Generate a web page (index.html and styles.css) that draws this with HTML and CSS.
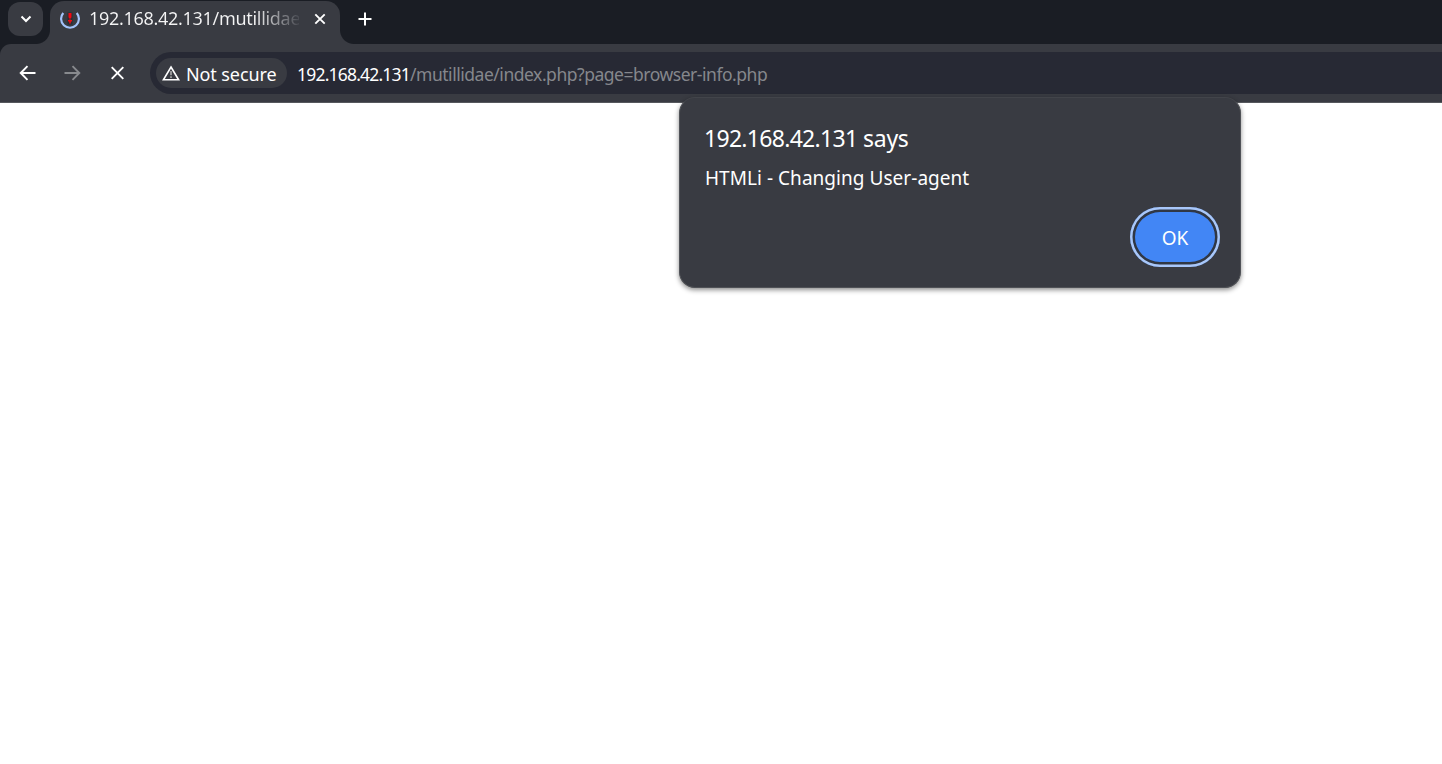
FILE: index.html
```html
<!DOCTYPE html>
<html lang="en">
<head>
<meta charset="utf-8">
<title>192.168.42.131/mutillidae</title>
<link rel="stylesheet" href="styles.css">
</head>
<body>
<header class="tabstrip">
  <button class="tab-search" aria-label="Search tabs"><svg width="12" height="8" viewBox="0 0 12 8"><path d="M1.500 1.500 6 6l4.500-4.500" fill="none" stroke="#fff" stroke-width="2"/></svg></button>
  <div class="tab">
    <svg class="favicon" width="20" height="20" viewBox="0 0 20 20"><path d="M3.300 4A8.900 8.900 0 1 0 16.700 4" fill="none" stroke="#a2c2fa" stroke-width="2.200"/><path d="M7.500 3.500h5v12h-5z" fill="#282e36"/><path d="M8.500 4h3v4l-.5 1.500H9L8.500 8zM8 11h1.400v-.8h1.200v.8H12v1.600h-1.200v1.800H9.200v-1.800H8z" fill="#f40813"/></svg>
    <span class="tab-title">192.168.42.131/mutillidae</span>
    <svg class="tab-close" width="12" height="12" viewBox="0 0 12 12"><path d="M1.300 1.300l9.400 9.400M10.700 1.300l-9.400 9.400" stroke="#fff" stroke-width="1.900"/></svg>
  </div>
  <svg class="new-tab" width="14" height="14" viewBox="0 0 14 14"><path d="M7 .5v13M.5 7h13" stroke="#fff" stroke-width="2"/></svg>
</header>
<nav class="toolbar">
  <svg class="nav-icon" width="18" height="18" viewBox="0 0 18 18"><path d="M16.500 9H2M8.500 2.200 1.700 9l6.800 6.800" fill="none" stroke="#fff" stroke-width="1.900"/></svg>
  <svg class="nav-icon" width="18" height="18" viewBox="0 0 18 18"><path d="M.5 9H15M8.500 2.200 15.300 9l-6.800 6.800" fill="none" stroke="#888a8e" stroke-width="1.900"/></svg>
  <svg class="nav-icon" width="18" height="18" viewBox="0 0 18 18"><path d="M2.700 3.200l11.600 11.600M14.300 3.200 2.700 14.800" stroke="#fff" stroke-width="1.900"/></svg>
  <div class="omnibox">
    <div class="security">
      <svg width="18" height="16" viewBox="0 0 18 16"><path d="M9 2 16.600 14.800H1.400z" fill="none" stroke="#fff" stroke-width="1.600"/><path d="M9 6v4.300M9 11.300v1.600" stroke="#bbb" stroke-width="1.400"/></svg>
      <span class="security-text">Not secure</span>
    </div>
    <div class="url"><span class="host">192.168.42.131</span><span class="path">/mutillidae/index.php?page=browser-info.php</span></div>
  </div>
</nav>
<main class="page"></main>
<section class="dialog" role="dialog">
  <h1 class="dialog-title"><span>192.168.42.131</span> says</h1>
  <p class="dialog-message">HTMLi - Changing User-agent</p>
  <div class="actions"><button class="ok">OK</button></div>
</section>
</body>
</html>
```
FILE: styles.css
```css
* { box-sizing: border-box; }
body {
  margin: 0;
  height: 764px;
  display: flex;
  flex-direction: column;
  overflow: hidden;
  background: #1a1d24;
  color: #fff;
  font-family: "Noto Sans", sans-serif;
}
button { border: 0; padding: 0; font-family: inherit; color: inherit; }
svg { display: block; flex: none; }
.tabstrip { height: 44px; flex: none; display: flex; align-items: flex-start; padding-left: 8px; background: #1a1d24; }
.tab-search {
  width: 35px; height: 34px; margin: 2px 7px 0 0; border-radius: 12px;
  background: #393b42; display: flex; align-items: center; justify-content: center;
}
.tab {
  position: relative; width: 290px; height: 43px; margin-top: 1px; padding: 0 14px 8px 10px;
  display: flex; align-items: center; border-radius: 14px 14px 0 0; background: #393b42;
}
.tab::before, .tab::after { content: ""; position: absolute; bottom: 0; width: 14px; height: 14px; }
.tab::before { right: 100%; background: radial-gradient(circle at 0 0, transparent 13.500px, #393b42 14.500px); }
.tab::after { left: 100%; background: radial-gradient(circle at 100% 0, transparent 13.500px, #393b42 14.500px); }
.tab-title {
  width: 210px; margin: 0 0 2px 9px; overflow: hidden; white-space: nowrap;
  font-size: 18px; line-height: 26px; letter-spacing: -0.300px;
  background: linear-gradient(90deg, #f4f4f5 165px, #4b4d54 209px); background-clip: text; color: transparent;
}
.tab-close { margin-left: 15px; }
.new-tab { margin: 12px 0 0 18px; }
.toolbar {
  height: 59px; flex: none; display: flex; align-items: center; padding: 0 0 1px 19px;
  background: #393b42; border-bottom: 1px solid #56585d; border-radius: 11px 0 0 0;
}
.nav-icon { margin-right: 27px; }
.omnibox {
  flex: 1; height: 42px; margin: 1px 0 0 -4px; padding-left: 6px; display: flex; align-items: center;
  background: #272934; border-radius: 21px 0 0 21px;
}
.security { width: 131px; height: 30px; padding-left: 6px; display: flex; align-items: center; border-radius: 15px; background: #393b42; }
.security-text { margin: 1px 0 0 6px; white-space: nowrap; font-size: 18px; line-height: 26px; letter-spacing: -0.100px; }
.url { margin: 1px 0 0 10px; white-space: nowrap; font-size: 17.500px; line-height: 26px; }
.host { letter-spacing: -0.800px; }
.path { color: #85878c; letter-spacing: -0.470px; }
.page { flex: 1; background: #fff; }
.dialog {
  position: absolute; left: 679px; top: 97px; width: 562px; height: 191px; padding: 24px 21px 20px 24px;
  display: flex; flex-direction: column; background: #393b42;
  border: 1px solid #505257; border-top-color: #42444a; border-radius: 16px; box-shadow: 0 2px 5px rgba(0, 0, 0, .45);
}
.dialog-title { margin: 0; font-size: 23px; line-height: 32px; font-weight: 400; letter-spacing: -0.300px; }
.dialog-title span { letter-spacing: -0.700px; }
.dialog-message { margin: 10px 0 0 1px; font-size: 19px; line-height: 28px; letter-spacing: 0.040px; }
.actions { display: flex; justify-content: flex-end; margin-top: auto; }
.ok {
  width: 90px; height: 60px; border-radius: 30px; padding-top: 2px; background: #4286f5;
  box-shadow: inset 0 0 0 2.500px #a8c7fa, inset 0 0 0 5px #303744; font-size: 19px; margin-right: -1px;
}
```
